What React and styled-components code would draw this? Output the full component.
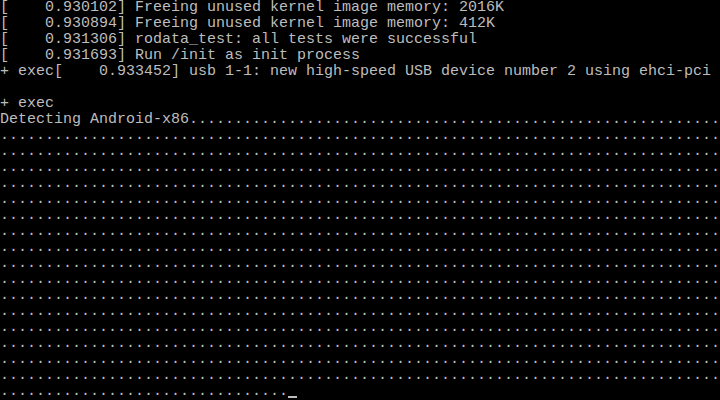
import React from "react";
import styled, { createGlobalStyle } from "styled-components";

const Global = createGlobalStyle`
  html, body { margin: 0; padding: 0; background: #000; }
  body { width: 720px; height: 400px; overflow: hidden; }
`;

const Screen = styled.div`
  width: 720px;
  height: 400px;
  background: #000;
  color: #bdbdbd;
  font-family: "Liberation Mono", "DejaVu Sans Mono", monospace;
  font-size: 15px;
  display: flex;
  flex-direction: column;
  overflow: hidden;
`;

const Line = styled.div`
  height: 16px;
  line-height: 16px;
  white-space: pre;
`;

const Cursor = styled.span`
  display: inline-block;
  width: 9px;
  height: 2px;
  background: #bdbdbd;
  vertical-align: -3px;
`;

const lines = [
  "[    0.930102] Freeing unused kernel image memory: 2016K",
  "[    0.930894] Freeing unused kernel image memory: 412K",
  "[    0.931306] rodata_test: all tests were successful",
  "[    0.931693] Run /init as init process",
  "+ exec[    0.933452] usb 1-1: new high-speed USB device number 2 using ehci-pci",
  "",
  "+ exec",
  "Detecting Android-x86" + ".".repeat(59),
];

const dotRows = Array.from({ length: 16 }, () => ".".repeat(80));

export default function App() {
  return (
    <>
      <Global />
      <Screen>
        {lines.map((l, i) => (
          <Line key={"l" + i}>{l}</Line>
        ))}
        {dotRows.map((l, i) => (
          <Line key={"d" + i}>{l}</Line>
        ))}
        <Line>
          {".".repeat(32)}
          <Cursor />
        </Line>
      </Screen>
    </>
  );
}
